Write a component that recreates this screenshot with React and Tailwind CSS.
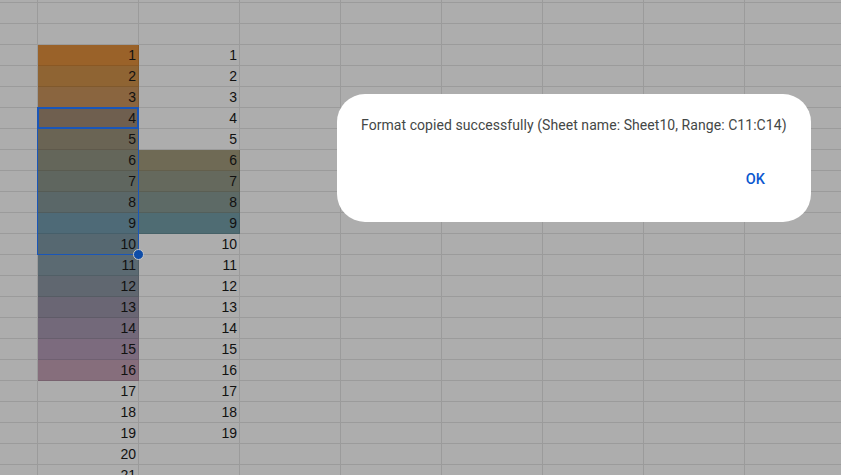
import React from 'react';

const COLS = 8;
const ROWS = 21;

// dimmed fills, measured from the screenshot
const fillB = {
  1: '#9a6229', 2: '#8f6433', 3: '#8a653f', 4: '#6f5f4f', 5: '#6a6454',
  6: '#64665a', 7: '#5f665f', 8: '#5a6768', 9: '#4e6a77', 10: '#566871',
  11: '#5b6a72', 12: '#606770', 13: '#6a6674', 14: '#73697a', 15: '#7c6b7e', 16: '#866e7c',
};
const fillC = { 6: '#6f6a55', 7: '#65695d', 8: '#5d6a66', 9: '#4f6c73' };

function Cell({ value, fill }) {
  return (
    <div
      className="w-[101px] h-full shrink-0 border-r border-b border-black/10 flex items-end justify-end pr-[2px] pb-[2px] text-[14px] leading-[16px] text-[#111]"
      style={fill ? { backgroundColor: fill } : undefined}
    >
      {value}
    </div>
  );
}

function Row({ n }) {
  return (
    <div className="h-[21px] flex">
      <div className="w-[38px] shrink-0 border-r border-b border-black/10" />
      {Array.from({ length: COLS }).map((_, i) => {
        let value = null;
        let fill = null;
        if (n && i === 0) { value = n; fill = fillB[n]; }
        if (n && i === 1 && n <= 19) { value = n; fill = fillC[n]; }
        return <Cell key={i} value={value} fill={fill} />;
      })}
    </div>
  );
}

export default function App() {
  return (
    <div className="relative w-[841px] h-[475px] overflow-hidden bg-[#adadad] font-['Liberation_Sans',Arial,sans-serif]">
      <div className="h-[3px] flex border-b border-black/10">
        <div className="w-[38px] shrink-0 border-r border-black/10" />
        {Array.from({ length: COLS }).map((_, i) => (
          <div key={i} className="w-[101px] shrink-0 border-r border-black/10" />
        ))}
      </div>
      <Row />
      <Row />
      {Array.from({ length: ROWS }).map((_, i) => (
        <Row key={i} n={i + 1} />
      ))}

      {/* selection B4:B10 */}
      <div className="absolute left-[37px] top-[107px] w-[102px] h-[148px] border border-[#1a56b8]" />
      <div className="absolute left-[37px] top-[107px] w-[102px] h-[22px] border-2 border-[#1a56b8]" />
      <div className="absolute left-[133px] top-[249px] w-[11px] h-[11px] rounded-full bg-[#0d4ca8] border border-[#c8c8c8]" />

      {/* dialog */}
      <div className="absolute left-[337px] top-[94px] w-[474px] h-[128px] bg-white rounded-[28px] font-['Roboto',sans-serif]">
        <p className="pl-[24px] pt-[21px] text-[14px] leading-[20px] tracking-[0.06px] text-[#444746]">
          Format copied successfully (Sheet name: Sheet10, Range: C11:C14)
        </p>
        <div className="flex justify-end pr-[46px] pt-[35px]">
          <span className="text-[14.5px] leading-[20px] font-medium text-[#0b57d0]">OK</span>
        </div>
      </div>
    </div>
  );
}
